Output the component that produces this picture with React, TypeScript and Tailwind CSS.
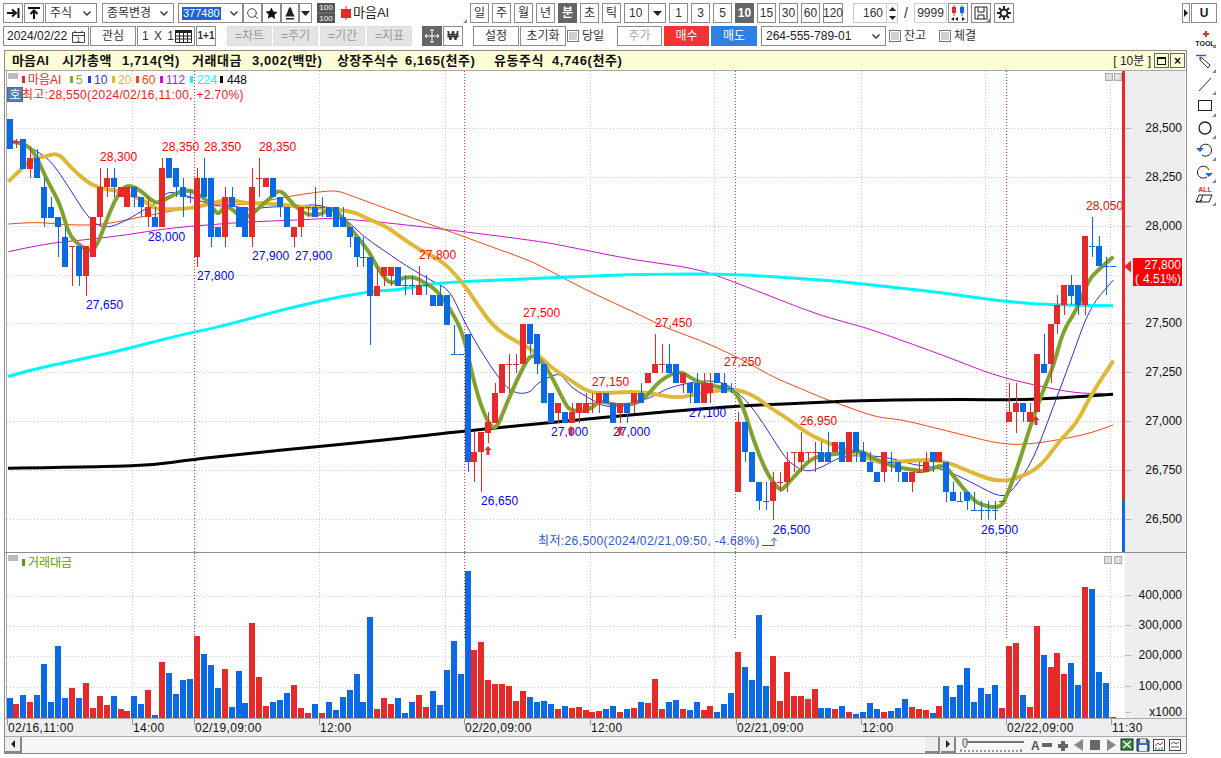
import React from "react";
import { Search } from "lucide-react";

type C = [string, number, number, number?, number?];
const g1: C[] = [
["b",28,116],["r",92,100,88,115],["b",88,178],["r",145,178,115,205],["b",145,205,118,205],["b",232,323,205,352],["b",291,323,262,323],["b",322,352,322,440],["b",380,470,350,470],["r",408,408,408,527],["b",408,497,408,527],["r",408,497,408,557],["r",322,440],["r",232,322,175,352],["r",205,232,175,262],["b",205,232,175,262],["r",232,262],["r",232,292],["b",232,262,232,292],["b",262,292,262,322],["r",292,322,262,352],["b",322,352,292,352],["r",175,352,145,352],["b",145,205],["b",175,232,175,262],["b",232,262,205,322],["b",262,262,240,280],["r",205,440,175,470],["b",205,262,145,262],["b",205,380,205,410],["b",352,380],["r",262,380,232,410],["b",262,292,232,292],["b",292,352],["b",292,380],["r",232,380,175,410],["r",205,205,145,262],["r",205,232],["b",205,262],["b",262,292,262,322],["b",292,352],["r",352,380,352,410],["r",292,352,292,380],["r",292,292,292,322],["b",292,322,232,322],["b",292,292,262,322],["b",292,322],["b",292,352],["b",322,352,292,352],["b",352,380,352,410],["b",380,440,380,470],["b",440,440,380,470],["b",440,557,440,705],["r",527,557,470,557],["r",470,497,470,527],["r",470,497,470,527],["b",470,527],
];
const g2: C[] = [
["b",135,135,105,165],["b",135,135,105,165],["r",135,165,78,165],["b",135,135,105,165],["b",165,197],["b",165,197,135,197],["b",165,255],["b",342,342,255,342],["b",342,342],["b",283,665,283,695],["r",637,665,575,725],["r",575,637,575,755],["r",545,578,515,610],["r",460,550,430,550],["r",372,460],["r",372,372,342,460],["r",372,372,342,400],["r",252,372],["b",252,312,252,342],["b",283,372,283,402],["b",372,490],["b",460,548],["r",490,520,490,548],["b",517,548],["r",517,548,490,548],["r",490,518,490,548],["r",490,518,460,518],["r",490,490,460,518],["r",460,490,460,518],["b",460,490],["b",490,548],["r",490,518,490,548],["b",490,518,490,548],["r",460,490,460,518],["b",460,490,430,490],["r",400,430],["r",372,400,283,400],["r",372,372,312,400],["b",372,400,312,400],["b",372,430],["r",400,430,400,460],["b",430,460,430,490],["b",430,490,400,490],["r",430,490,400,490],["r",430,460,400,490],["b",400,430],["b",430,460,400,460],["b",445,445,430,460],["r",545,755,515,755],["b",545,637,545,665],["b",637,725],["b",725,782,725,810],["b",782,782,725,810],["r",725,782,695,840],["r",725,725,695,755],
];
const g3: C[] = [
["r",755,815,725,845],["r",725,725,725,785],["r",725,755,665,785],["r",725,725,725,755],["r",725,725,695,785],["b",725,755,695,755],["b",725,755,665,755],["r",695,725],["b",695,755],["r",665,755],["b",665,725,665,755],["b",725,755,695,755],["b",755,785,725,785],["b",785,815],["r",725,785,725,815],["b",755,755,725,785],["b",755,785,755,815],["b",785,815],["r",785,815,785,845],["r",785,785,755,785],["r",755,785,725,785],["b",725,755,725,785],["r",725,755],["b",755,845,755,875],["b",845,872,815,872],["b",872,872,845,872],["b",845,872,845,900],["b",900,900,845,900],["b",900,900,872,930],["b",900,900,872,930],["b",900,900,872,930],["r",872,872],
["r",605,637,520,637],["r",580,605,520,668],["b",580,605,580,637],["r",605,637,580,637],["r",432,605],["b",462,490,372,490],["r",343,462,343,520],["r",285,343,255,372],["r",226,285,226,315],["b",226,257,195,285],["b",226,285,226,315],["r",78,285,78,315],["b",108,108,20,140],["b",108,168,78,168],["b",168,168,140,255],["b",168,168,168,168],
];
const bars1 = "b444 r462 b435 r456 b435 b342 b456 b288 b444 r414 b444 r399 r474 r438 r465 b438 r477 r483 b438 b462 r420 b495 r336 b369 b432 b390 b387 r258 b312 b345 b414 r357 b471 b363 b459 r219 r381 r468 b456 b450 b429 r405 r474 r489 b462 r489 b456 b480 b441 b420 b372 b456 b201 r477 r444 r462 b444 b489 b456 r435 r471 b423 b465 b360 b273 b372 b63 r300 r276 r390 r402 r402 r408 r453 r423 b441 b456 b453 b462 r477 b468 r474 r471 r480 r486 r483 b477 b468 r486 b477 r474 b456 r459 r387 r477 b456 b450 r477 b480 b456 r480 r468 b486 b462 b429 r306 b351 b390 b195 b408 r318 r453 r366 r438 r438 r447 r417 b474 b474 r477 b468 r486 b492 b486 b459 b477 r486 b483 b474 b447 r471 r477 r480 b489 r468 b408 b441 b405 b354 b456 b414 b432 b405 r474 r288 r279 b435 r471 r228 b315 r351 r309 r372 b339 b405 r111 b117 b366 b399 b501".split(" ");

const RED = "#e62a2a";
const BLUE = "#0a6ae6";
const cx = (i: number) => 9.5 + i * 6.94;
const VX = [132.5, 319.5, 445.5, 590.5, 714.5, 861.5, 985.5, 1110.5];
const RX = [194.5, 464.5, 735.5, 1006.5];

type P = [number, number];
const pts = (a: number[], bx: number, by: number, xmin: number, xmax: number): P[] => {
  const r: P[] = [];
  for (let i = 0; i < a.length; i += 2) {
    const x = bx + a[i] / 3;
    if (x >= xmin && x < xmax) r.push([x, by + a[i + 1] / 3]);
  }
  return r;
};
const ma = (z1: number[], z2: number[], z3: number[]): P[] => [
  ...pts(z1, 0, 110, 0, 400),
  ...pts(z2, 400, 240, 400, 780),
  ...pts(z3, 780, 210, 780, 1200),
];
const smooth = (p: P[]) => {
  let d = `M${p[0][0]} ${p[0][1]}`;
  for (let i = 1; i < p.length - 1; i++) {
    const mx = (p[i][0] + p[i + 1][0]) / 2;
    const my = (p[i][1] + p[i + 1][1]) / 2;
    d += ` Q${p[i][0]} ${p[i][1]} ${mx} ${my}`;
  }
  const l = p[p.length - 1];
  return d + ` L${l[0]} ${l[1]}`;
};

const green = ma(
  [36,95,80,100,110,140,140,210,180,280,205,370,235,405,270,425,290,410,320,330,345,270,370,232,390,226,420,240,470,285,500,265,540,245,570,240,600,255,630,280,654,318,675,285,700,300,720,320,750,320,780,290,810,265,840,235,880,285,920,315,960,315,1000,290,1040,340,1080,390,1110,430,1130,470,1170,525],
  [0,115,40,110,70,125,110,150,150,205,190,280,220,420,250,520,285,580,320,490,360,400,395,335,440,380,490,480,510,515,570,510,600,480,640,495,700,495,740,470,780,420,840,390,880,420,940,440,1000,445,1030,500,1060,600,1100,700,1140,750],
  [0,845,20,825,60,780,100,740,180,730,240,720,280,745,340,770,400,780,440,785,490,760,530,810,570,860,600,885,660,895,680,860,720,750,750,650,790,540,820,470,850,360,890,300,925,210,960,175,1000,140]
);
const yellow = ma(
  [25,215,60,180,100,145,135,140,175,128,210,170,260,215,300,235,340,240,380,250,430,270,465,298,520,298,580,294,640,278,690,268,740,280,800,280,860,285,920,292,1000,298,1060,305,1100,325,1160,350],
  [0,-10,60,30,130,65,190,130,230,190,280,260,340,300,400,330,450,380,510,420,570,460,640,458,700,455,760,460,830,475,900,460,1000,445,1060,465,1120,510],
  [0,610,60,654,100,680,160,705,240,735,300,760,360,755,440,748,500,755,580,790,660,818,740,795,790,760,840,690,890,640,930,560,1000,452]
);
const thin = ma(
  [100,118,140,140,180,190,230,270,270,330,310,355,350,345,390,325,430,300,470,280,500,245,540,250,580,265,620,280,660,290,700,285,740,300,770,295,820,290,880,290,940,283,980,290,1020,310,1090,380,1150,420],
  [0,65,40,90,100,125,150,150,190,240,240,330,300,420,340,460,390,460,410,430,470,400,490,410,510,440,560,470,620,505,690,490,750,475,800,445,860,430,920,420,980,430,1040,480,1090,550,1150,640],
  [0,720,30,760,80,788,130,770,180,740,260,735,340,745,400,765,460,770,520,790,580,820,665,865,700,840,760,750,820,590,880,430,930,290,1000,210]
);
const orange = ma(
  [25,342,110,335,190,345,300,345,380,330,450,315,560,295,640,280,750,285,830,265,940,248,1010,240,1060,260],
  [220,0,300,30,400,65,500,120,600,170,700,215,800,265,900,300,1010,350,1100,400],
  [0,510,60,535,130,565,200,590,290,622,360,628,450,650,550,675,665,703,750,703,860,685,930,670,1000,645]
);
const magenta = ma(
  [25,425,140,400,250,390,380,375,500,355,620,345,750,335,900,330,1030,322],
  [400,0,530,25,700,60,890,85,1000,125],
  [0,270,130,320,250,350,390,400,500,440,640,495,760,525,890,550,970,550]
);
const cyanFixed: P[] = [[8,376.5],[30,370],[70,361.5],[117,351.5],[180,335],[220,326.7],[300,305],[370,291],[400,290],[433,283],[500,280],[567,277],[647,274],[733,274],[780,277.3],[833,280.7],[893,287.3],[947,293.3],[997,300.7],[1047,305],[1113,305.7]];
const black: P[] = [[8,468.3],[110,466.7],[153,465],[193,459.3],[243,454],[317,446.7],[367,441.7],[400,438.3],[467,430.7],[600,417.7],[733,406],[800,403.3],[867,400],[970,399.3],[1007,400],[1057,398.3],[1113,394.3]];

const plotLines = (
  <>
    {VX.map((x) => <line key={x} x1={x} x2={x} y1={71} y2={552} stroke="#cfcfcf" strokeDasharray="1 2" />)}
    {[128, 177, 226, 275, 323, 372, 421, 470, 519].map((y) => <line key={y} x1={7} x2={1125} y1={y + 0.5} y2={y + 0.5} stroke="#cfcfcf" strokeDasharray="1 2" />)}
    {RX.map((x) => <line key={x} x1={x} x2={x} y1={71} y2={552} stroke="#ff2050" strokeDasharray="1 2" />)}
  </>
);

function Candles() {
  const all: { c: C; i: number; by: number }[] = [];
  g1.forEach((c, i) => all.push({ c, i, by: 110 }));
  g2.forEach((c, i) => all.push({ c, i: i + 57, by: 240 }));
  g3.forEach((c, i) => all.push({ c, i: i + 112, by: 210 }));
  return (
    <g shapeRendering="crispEdges">
      {all.map(({ c, i, by }) => {
        const x = Math.round(cx(i));
        const fill = c[0] === "r" ? RED : BLUE;
        const t = Math.round(by + c[1] / 3);
        const b = Math.round(by + c[2] / 3);
        const wt = c[3] !== undefined ? Math.round(by + c[3] / 3) : t;
        const wb = c[4] !== undefined ? Math.round(by + c[4] / 3) : b;
        return (
          <g key={i} fill={fill}>
            <rect x={x} y={wt} width={1} height={Math.max(wb - wt, 1)} />
            <rect x={x - 3} y={t} width={6} height={Math.max(b - t, 1)} />
          </g>
        );
      })}
    </g>
  );
}

const Tag = ({ x, y, c, t }: { x: number; y: number; c: string; t: string }) => (
  <text x={x} y={y + 4} fill={c} fontSize={12} letterSpacing={0.1}>{t}</text>
);
const Up = ({ x, y }: { x: number; y: number }) => (
  <path d={`M${x} ${y - 5}l3.5 4h-2v5h-3v-5h-2z`} fill={RED} />
);
const LEG: [number, number, string, string][] = [
  [22, 28, "#e62a2a", "마음AI"], [70, 76, "#85a83a", "5"], [88, 94, "#2a3ce6", "10"], [112, 118, "#e0b838", "20"], [136, 142, "#f04a10", "60"], [160, 166, "#d010d0", "112"], [190, 197, "#00ffff", "224"], [220, 227, "#000000", "448"],
];

function Upper() {
  return (
    <svg width={1120} height={481} viewBox="5 71 1120 481" className="block shrink-0">
      <rect x={5} y={71} width={1120} height={481} fill="#fff" />
      {plotLines}
      <line x1={6.5} x2={6.5} y1={71} y2={552} stroke="#aaa" />
      <path d={smooth(magenta)} fill="none" stroke="#d010d0" strokeWidth={1} />
      <path d={smooth(orange)} fill="none" stroke="#f04a10" strokeWidth={1} />
      <path d={smooth(thin)} fill="none" stroke="#2a30e0" strokeWidth={1} />
      <path d={smooth(cyanFixed)} fill="none" stroke="#00f6ff" strokeWidth={3} />
      <path d={smooth(black)} fill="none" stroke="#000" strokeWidth={3} />
      <path d={smooth(yellow)} fill="none" stroke="#e0b838" strokeWidth={4} strokeLinejoin="round" />
      <path d={smooth(green)} fill="none" stroke="#7fa32e" strokeWidth={4} strokeLinejoin="round" />
      <Candles />
      <rect x={8} y={73} width={10} height={6} fill="#bbb" />
      {LEG.map(([mx, tx, c, t]) => (
        <g key={t}>
          <rect x={mx} y={76} width={3} height={7} fill={c} />
          <text x={tx} y={84} fill={c} fontSize={12}>{t}</text>
        </g>
      ))}
      <rect x={7.5} y={87.5} width={15} height={14} fill="#4f7fbd" stroke="#5a6a80" />
      <text x={15} y={99} fill="#fff" fontSize={12} textAnchor="middle">호</text>
      <text x={22} y={99} fill="#f01820" fontSize={12} letterSpacing={0.33}>최고:28,550(2024/02/16,11:00, +2.70%)</text>
      <Tag x={100} y={157} c="#f00" t="28,300" />
      <Tag x={162} y={147} c="#f00" t="28,350" />
      <Tag x={204} y={147} c="#f00" t="28,350" />
      <Tag x={259} y={147} c="#f00" t="28,350" />
      <Tag x={419} y={255} c="#f00" t="27,800" />
      <Tag x={523} y={313} c="#f00" t="27,500" />
      <Tag x={655} y={323} c="#f00" t="27,450" />
      <Tag x={724} y={362} c="#f00" t="27,250" />
      <Tag x={592} y={382} c="#f00" t="27,150" />
      <Tag x={800} y={421} c="#f00" t="26,950" />
      <Tag x={1086} y={206} c="#f00" t="28,050" />
      <Tag x={86} y={305} c="#00f" t="27,650" />
      <Tag x={148} y={237} c="#00f" t="28,000" />
      <Tag x={197} y={276} c="#00f" t="27,800" />
      <Tag x={252} y={256} c="#00f" t="27,900" />
      <Tag x={295} y={256} c="#00f" t="27,900" />
      <Tag x={481} y={501} c="#00f" t="26,650" />
      <Tag x={551} y={432} c="#00f" t="27,000" />
      <Tag x={613} y={432} c="#00f" t="27,000" />
      <Tag x={689} y={413} c="#00f" t="27,100" />
      <Tag x={773} y={530} c="#00f" t="26,500" />
      <Tag x={981} y={530} c="#00f" t="26,500" />
      <Up x={488} y={451} />
      <Up x={571} y={431} />
      <Up x={620} y={431} />
      <Up x={1036} y={421} />
      <text x={538} y={545} fill="#2a5ad0" fontSize={12} letterSpacing={0.38}>최저:26,500(2024/02/21,09:50, -4.68%)</text>
      <path d="M762 545.5h12M774 545.5v-6M771.5 541l2.5-3 2.5 3" fill="none" stroke="#2a5ad0" />
      <g fill="#ddd" stroke="#aaa">
        <rect x={1105.5} y={73.5} width={7} height={7} />
        <rect x={1114.5} y={73.5} width={7} height={7} />
      </g>
      <path d="M1116 75.5l3 3M1119 75.5l-3 3" stroke="#fff" />
      <rect x={1122} y={71} width={3} height={429} fill={RED} />
      <rect x={1122} y={500} width={3} height={52} fill={BLUE} />
    </svg>
  );
}

function Lower() {
  return (
    <svg width={1120} height={165} viewBox="5 553 1120 165" className="block shrink-0">
      <rect x={5} y={553} width={1120} height={165} fill="#fff" />
      {VX.map((x) => <line key={x} x1={x} x2={x} y1={553} y2={718} stroke="#cfcfcf" strokeDasharray="1 2" />)}
      {[596, 626, 656, 687].map((y) => <line key={y} x1={7} x2={1125} y1={y + 0.5} y2={y + 0.5} stroke="#cfcfcf" strokeDasharray="1 2" />)}
      {RX.map((x) => <line key={x} x1={x} x2={x} y1={553} y2={640} stroke="#ff2050" strokeDasharray="1 2" />)}
      <line x1={6.5} x2={6.5} y1={553} y2={718} stroke="#aaa" />
      <rect x={8} y={555} width={10} height={6} fill="#bbb" />
      <rect x={22} y={559} width={3} height={7} fill="#5ca000" />
      <text x={28} y={567} fill="#5ca000" fontSize={12}>거래대금</text>
      <g shapeRendering="crispEdges">
        {bars1.map((b, i) => {
          const top = Math.round(550 + Number(b.slice(1)) / 3);
          return <rect key={i} x={Math.round(cx(i)) - 3} y={top} width={6} height={718 - top} fill={b[0] === "r" ? RED : BLUE} />;
        })}
      </g>
      <g fill="#ddd" stroke="#aaa">
        <rect x={1104.5} y={556.5} width={7} height={7} />
        <rect x={1114.5} y={556.5} width={7} height={7} />
      </g>
    </svg>
  );
}

const Axis = ({ h, top, items }: { h: number; top: number; items: [string, number][] }) => (
  <svg width={60} height={h} viewBox={`1125 ${top} 60 ${h}`} className="block shrink-0">
    <rect x={1125} y={top} width={60} height={h} fill="#eeeeee" />
    {items.map(([t, y]) => (
      <g key={t}>
        <line x1={1125} x2={1131} y1={y + 0.5} y2={y + 0.5} stroke="#bbb" />
        <text x={1182} y={y + 4} textAnchor="end" fontSize={12} fill="#111">{t}</text>
      </g>
    ))}
    {top < 100 && (
      <g>
        <path d="M1124 266.5l7-6v12z" fill={RED} />
        <rect x={1133} y={258} width={49} height={28} fill="#f00" />
        <text x={1181} y={269} textAnchor="end" fontSize={12} fill="#fff">27,800</text>
        <text x={1135} y={283} fontSize={12} fill="#fff">(</text>
        <text x={1181} y={283} textAnchor="end" fontSize={12} fill="#fff">4.51%)</text>
      </g>
    )}
  </svg>
);

const base = "border border-[#8c8c8c] bg-white text-[#333] text-[12px] flex items-center justify-center shrink-0 leading-none whitespace-nowrap";
const Chev = () => (
  <svg width={10} height={7} viewBox="0 0 10 7" className="shrink-0"><path d="M1.5 1.5L5 5l3.5-3.5" fill="none" stroke="#333" strokeWidth={1.4} /></svg>
);
const Caret = () => (
  <svg width={9} height={5} viewBox="0 0 9 5" className="shrink-0"><path d="M0 0h9L4.5 5z" fill="#222" /></svg>
);
const Corner = () => (
  <span className="absolute right-0 bottom-0 w-0 h-0 border-l-[4px] border-l-transparent border-b-[4px] border-b-[#888]" />
);
const Cb = () => (
  <span className="block w-[12px] h-[12px] border border-[#777] bg-[#d0d0d0] shrink-0 shadow-[inset_0_0_0_1px_#fff]" />
);
const Tf = ({ t, w = "w-[19px]", a }: { t: string; w?: string; a?: boolean }) => (
  <div className={a ? `${w} h-[20px] ml-[3px] bg-[#666] text-white font-bold text-[12px] flex items-center justify-center shrink-0 leading-none` : `${base} ${w} h-[20px] ml-[3px]`}>{t}</div>
);
const Dis = ({ t, cl }: { t: string; cl: string }) => (
  <div className={`${cl} w-[45px] h-[20px] bg-[#e4e4e4] border border-[#ddd] text-[#999] text-[12px] flex items-center justify-center shrink-0 leading-none`}>{t}</div>
);

function Row1() {
  return (
    <div className="flex h-[20px] mt-[3px] ml-[3px]">
      <div className={`${base} w-[20px] h-[20px]`}>
        <svg width={13} height={10} viewBox="0 0 13 10"><path d="M0 5h7M5 1.5L9 5 5 8.5M11.5 0v10" fill="none" stroke="#111" strokeWidth={2} /></svg>
      </div>
      <div className={`${base} w-[20px] h-[20px] ml-[1px]`}>
        <svg width={12} height={12} viewBox="0 0 12 12"><path d="M0 1h12M6 12V4M2.500 7L6 3.500 9.500 7" fill="none" stroke="#111" strokeWidth={2} /></svg>
      </div>
      <div className={`${base} w-[52px] h-[20px] ml-[1px] !justify-between px-[4px]`}><span>주식</span><Chev /></div>
      <div className={`${base} w-[72px] h-[20px] ml-[5px] !justify-between px-[4px]`}><span>종목변경</span><Chev /></div>
      <div className={`${base} w-[65px] h-[20px] ml-[4px] !justify-between px-[3px]`}>
        <span className="bg-[#1b66d2] text-white px-[1px] h-[13px] flex items-center text-[11px]">377480</span><Chev />
      </div>
      <div className={`${base} w-[19px] h-[20px]`}><Search size={13} strokeWidth={1.6} /></div>
      <div className={`${base} w-[19px] h-[20px]`}>
        <svg width={13} height={13} viewBox="0 0 24 24"><path d="M12 1l3.400 7.300 7.600 1-5.600 5.400 1.400 7.900L12 18l-6.800 3.600 1.400-7.900L1 8.300l7.600-1z" fill="#111" /></svg>
      </div>
      <div className={`${base} w-[18px] h-[20px]`}>
        <svg width={12} height={13} viewBox="0 0 12 13"><path d="M6 0C3.500 2 4 6 1 9.500h10C8 6 8.500 2 6 0zM2 11h8v1.500H2z" fill="#222" /></svg>
      </div>
      <div className={`${base} w-[13px] h-[20px]`}><Caret /></div>
      <div className="w-[18px] h-[20px] ml-[5px] bg-[#666] flex flex-col justify-between shrink-0">
        <span className="text-[8px] leading-[9px] text-white text-center bg-[#555]">100</span>
        <span className="text-[8px] leading-[9px] text-white text-center bg-[#555]">100</span>
      </div>
      <div className="relative w-[126px] h-[20px] ml-[6px] flex items-center text-[13px] text-[#222] shrink-0">
        <svg width={10} height={14} viewBox="0 0 10 14" className="mr-[2px] shrink-0"><path d="M5 0v14" stroke="#e62a2a" /><rect x={0} y={3} width={10} height={9} fill="#e62a2a" /></svg>
        마음AI
        <Corner />
      </div>
      <Tf t="일" />
      <Tf t="주" />
      <Tf t="월" />
      <Tf t="년" />
      <Tf t="분" a />
      <Tf t="초" />
      <Tf t="틱" />
      <div className={`${base} w-[42px] h-[20px] ml-[3px]`}>
        <span className="flex-1 pl-[4px]">10</span>
        <span className="w-[17px] h-full border-l border-[#8c8c8c] flex items-center justify-center"><Caret /></span>
      </div>
      <Tf t="1" />
      <Tf t="3" />
      <Tf t="5" />
      <Tf t="10" a />
      <Tf t="15" />
      <Tf t="30" />
      <Tf t="60" />
      <Tf t="120" w="w-[20px]" />
      <div className="w-[45px] h-[20px] ml-[10px] flex border border-[#ccc] shrink-0 text-[12px] text-[#333] leading-none">
        <span className="flex-1 flex items-center justify-end pr-[3px]">160</span>
        <span className="w-[11px] flex flex-col border-l border-[#ccc] items-center justify-around">
          <svg width={7} height={4} viewBox="0 0 7 4"><path d="M0 4h7L3.500 0z" fill="#222" /></svg>
          <svg width={7} height={4} viewBox="0 0 7 4"><path d="M0 0h7L3.500 4z" fill="#222" /></svg>
        </span>
      </div>
      <span className="w-[16px] text-center text-[14px] leading-[20px] text-[#333] shrink-0">/</span>
      <div className="w-[33px] h-[20px] border border-[#ccc] flex items-center justify-center text-[12px] text-[#333] shrink-0 leading-none">9999</div>
      <div className={`${base} relative w-[20px] h-[20px] ml-[1px]`}>
        <svg width={16} height={16} viewBox="0 0 16 16">
          <path d="M4 0v11" stroke="#e62a2a" /><rect x={2} y={2} width={4} height={6} fill="#e62a2a" />
          <path d="M12 0v11" stroke={BLUE} /><rect x={10} y={2} width={4} height={6} fill={BLUE} />
          <path d="M1 14l3-2v4zM5 14l3-2v4zM12 12l3 2-3 2z" fill="#222" />
        </svg>
      </div>
      <div className={`${base} relative w-[20px] h-[20px] ml-[3px]`}>
        <svg width={14} height={14} viewBox="0 0 14 14"><path d="M1 1h12v12H1zM4 1v5h6V1M4 13V9h6v4" fill="none" stroke="#222" /></svg>
        <Corner />
      </div>
      <div className={`${base} w-[20px] h-[20px] ml-[3px]`}>
        <svg width={14} height={14} viewBox="0 0 14 14"><circle cx={7} cy={7} r={3.500} fill="none" stroke="#222" strokeWidth={2} /><path d="M7 0v3M7 11v3M0 7h3M11 7h3M2 2l2 2M10 10l2 2M12 2l-2 2M4 10l-2 2" stroke="#222" strokeWidth={2} /></svg>
      </div>
      <div className="flex-1" />
      <div className={`${base} w-[8px] h-[20px]`}>
        <svg width={4} height={8} viewBox="0 0 4 8"><path d="M0 0l4 4-4 4z" fill="#222" /></svg>
      </div>
      <div className={`${base} w-[26px] h-[20px] ml-[1px] font-bold !text-[#222] mr-[4px]`}>U</div>
    </div>
  );
}

function Row2() {
  return (
    <div className="flex h-[20px] mt-[3px] ml-[3px] items-center">
      <div className={`${base} w-[86px] h-[20px] !justify-between px-[3px] !text-[#222]`}>
        <span>2024/02/22</span>
        <svg width={13} height={13} viewBox="0 0 13 13"><path d="M.5 2.500h12v10H.5zM.5 5.500h12M3 .5v2M10 .5v2" fill="none" stroke="#444" /><text x={6.500} y={12} fontSize={7} textAnchor="middle" fill="#333">1</text></svg>
      </div>
      <div className={`${base} w-[46px] h-[20px] ml-[1px]`}>관심</div>
      <div className={`${base} w-[58px] h-[20px] ml-[1px] !justify-between pl-[4px] pr-[2px]`}>
        <span className="tracking-[1px]">1 X 1</span>
        <svg width={17} height={13} viewBox="0 0 17 13"><path d="M.5.5h16v12H.5z" fill="#fff" stroke="#222" /><rect width={17} height={3} fill="#222" /><path d="M0 6h17M0 9h17M4.500 3v10M8.500 3v10M12.500 3v10" stroke="#222" /></svg>
      </div>
      <div className={`${base} w-[20px] h-[20px] ml-[1px] !text-[10px] font-bold`}>1+1</div>
      <Dis t="=차트" cl="ml-[11px]" />
      <Dis t="=주기" cl="ml-[1px]" />
      <Dis t="=기간" cl="ml-[2px]" />
      <Dis t="=지표" cl="ml-[2px]" />
      <div className="w-[20px] h-[20px] ml-[10px] bg-[#666] flex items-center justify-center shrink-0">
        <svg width={16} height={16} viewBox="0 0 16 16"><path d="M8 1v14M1 8h14M6 3l2-2 2 2M6 13l2 2 2-2M3 6L1 8l2 2M13 6l2 2-2 2" fill="none" stroke="#fff" /></svg>
      </div>
      <div className={`${base} w-[20px] h-[20px] ml-[1px] font-bold`}>₩</div>
      <div className={`${base} w-[46px] h-[20px] ml-[10px]`}>설정</div>
      <div className={`${base} w-[46px] h-[20px] ml-[1px]`}>초기화</div>
      <span className="ml-[1px] shrink-0"><Cb /></span>
      <span className="ml-[3px] w-[35px] shrink-0 text-[12px] text-[#333] leading-none">당일</span>
      <div className={`${base} w-[45px] h-[20px] !text-[#aaa]`}>주가</div>
      <div className="w-[45px] h-[20px] ml-[2px] bg-[#f33232] text-white text-[12px] flex items-center justify-center shrink-0 leading-none">매수</div>
      <div className="w-[46px] h-[20px] ml-[2px] bg-[#2f7fe6] text-white text-[12px] flex items-center justify-center shrink-0 leading-none">매도</div>
      <div className={`${base} w-[125px] h-[20px] ml-[4px] !justify-between px-[4px] !text-[#222]`}><span>264-555-789-01</span><Chev /></div>
      <span className="ml-[3px] shrink-0"><Cb /></span>
      <span className="ml-[3px] w-[35px] shrink-0 text-[12px] text-[#333] leading-none">잔고</span>
      <span className="shrink-0"><Cb /></span>
      <span className="ml-[3px] shrink-0 text-[12px] text-[#333] leading-none">체결</span>
    </div>
  );
}

const toolWrap = "relative w-[22px] flex items-center justify-center shrink-0";
function Tools() {
  return (
    <div className="w-[34px] shrink-0 flex flex-col items-center pt-[4px] pl-[2px]">
      <div className={`${toolWrap} h-[21px]`}>
        <svg width={22} height={18} viewBox="0 0 22 18"><path d="M12 2v6M9 5h6" stroke="#e62a2a" strokeWidth={2} /><text x={11} y={16.500} fontSize={7} fontWeight={700} textAnchor="middle" fill="#222">TOOL</text></svg><Corner />
      </div>
      <div className={`${toolWrap} h-[22px] mt-[3px]`}>
        <svg width={20} height={16} viewBox="0 0 20 16"><path d="M1 1.500h10" stroke={BLUE} strokeWidth={1.500} /><path d="M5 3l2 1 8 7-2 3-8-8z" fill="#fff" stroke="#333" /><path d="M5 3l2 1-1.500 2z" fill="#e62a2a" /></svg><Corner />
      </div>
      <div className={`${toolWrap} h-[22px]`}>
        <svg width={16} height={16} viewBox="0 0 16 16"><path d="M2 15L14 2" stroke="#333" /></svg><Corner />
      </div>
      <div className={`${toolWrap} h-[22px]`}>
        <svg width={16} height={14} viewBox="0 0 16 14"><rect x={1.500} y={1.500} width={13} height={10} fill="none" stroke="#222" /></svg><Corner />
      </div>
      <div className={`${toolWrap} h-[22px]`}>
        <svg width={16} height={16} viewBox="0 0 16 16"><circle cx={8} cy={8} r={6} fill="none" stroke="#222" strokeWidth={1.300} /></svg><Corner />
      </div>
      <div className={`${toolWrap} h-[22px]`}>
        <svg width={18} height={16} viewBox="0 0 18 16"><path d="M4 6a6 6 0 1 1 2 7" fill="none" stroke="#222" /><path d="M0 6h8L4 10z" fill={BLUE} /></svg><Corner />
      </div>
      <div className={`${toolWrap} h-[22px]`}>
        <svg width={18} height={16} viewBox="0 0 18 16"><path d="M13 6a6 6 0 1 0-2 7" fill="none" stroke="#222" /><path d="M9 9h8l-4 4z" fill={BLUE} /></svg><Corner />
      </div>
      <div className={`${toolWrap} h-[22px] mt-[1px]`}>
        <svg width={20} height={20} viewBox="0 0 20 20"><text x={10} y={6.500} fontSize={7} fontWeight={700} textAnchor="middle" fill="#e62a2a">ALL</text><path d="M4 10h13l-3 7H1zM1 17l5-1 1-1 M8 10l-3 7" fill="#fff" stroke="#222" /></svg><Corner />
      </div>
    </div>
  );
}

const DATES: [number, string][] = [[8, "02/16,11:00"], [133, "14:00"], [195, "02/19,09:00"], [320, "12:00"], [465, "02/20,09:00"], [591, "12:00"], [737, "02/21,09:00"], [862, "12:00"], [1007, "02/22,09:00"], [1112, "11:30"]];

function BottomIcons() {
  return (
    <svg width={160} height={16} viewBox="1028 737 160 16" className="block shrink-0">
      <text x={1033} y={750} fontSize={12} fontWeight={700} fill="#555">A</text>
      <rect x={1044} y={743} width={10} height={4} fill="#666" />
      <path d="M1063 741h4v3h3v4h-3v3h-4v-3h-3v-4h3z" fill="#666" />
      <path d="M1085 739v12l-9-6z" fill="#888" />
      <rect x={1092} y={740} width={10} height={10} fill="#666" />
      <path d="M1109 739v12l9-6z" fill="#888" />
      <rect x={1123} y={739} width={12} height={11} fill="#2e8b3a" stroke="#222" />
      <path d="M1125 741l8 7M1133 741l-8 7" stroke="#fff" strokeWidth={1.500} />
      <path d="M1139 739h10l2 2v10h-12z" fill="#3a6fc0" stroke="#223" />
      <rect x={1142} y={739} width={6} height={4} fill="#ddd" />
      <rect x={1141} y={745} width={8} height={6} fill="#eee" />
      <rect x={1155.500} y={739.500} width={11} height={11} fill="#fff" stroke="#444" />
      <path d="M1157 746l3-3 2 2 3-3" fill="none" stroke="#e62a2a" />
      <path d="M1158 750v-3M1161 750v-2M1164 750v-3" stroke="#1a8a2a" />
      <rect x={1171.500} y={739.500} width={11} height={11} fill="#fff" stroke="#444" />
      <path d="M1173 744l3-2 2 2 3-2" fill="none" stroke="#e62a2a" />
      <path d="M1173 747h8" stroke="#555" />
    </svg>
  );
}

export default function App() {
  return (
    <div className="w-[1221px] h-[758px] bg-white overflow-hidden flex flex-col [font-family:'Liberation_Sans','Noto_Sans_CJK_KR',sans-serif]">
      <Row1 />
      <div className="flex flex-1 min-h-0">
        <div className="w-[1187px] shrink-0">
          <Row2 />
          <div className="ml-[4px] mt-[4px] w-[1183px] border border-[#8c8c8c]">
            <div className="h-[19px] bg-[#fdfdd6] flex items-center pl-[7px] pr-[1px] font-bold text-[13px] text-[#111] leading-none whitespace-pre">
              <span className="w-[50px] shrink-0">마음AI</span>
              <span className="w-[60px] shrink-0 tracking-[0.5px]">시가총액</span>
              <span className="w-[70px] shrink-0 tracking-[0.6px]">1,714(억)</span>
              <span className="w-[60px] shrink-0 tracking-[0.5px]">거래대금</span>
              <span className="w-[85px] shrink-0 tracking-[0.6px]">3,002(백만)</span>
              <span className="w-[68px] shrink-0 tracking-[0.3px]">상장주식수</span>
              <span className="w-[89px] shrink-0 tracking-[0.6px]">6,165(천주)</span>
              <span className="w-[58px] shrink-0 tracking-[0.5px]">유동주식</span>
              <span className="shrink-0 tracking-[0.6px]">4,746(천주)</span>
              <span className="ml-auto text-[12px] font-normal text-[#222] mr-[1px]">[ 10분 ]</span>
              <div className="w-[15px] h-[15px] border border-[#666] ml-[2px] flex items-center justify-center shrink-0 bg-[#fdfdd6]">
                <span className="w-[9px] h-[8px] border border-[#111] border-t-2" />
              </div>
              <div className="w-[15px] h-[15px] border border-[#666] ml-[1px] flex items-center justify-center shrink-0 text-[12px] font-bold text-[#111]">×</div>
            </div>
            <div className="h-px bg-[#aaa]" />
            <div className="flex border-b border-[#8c8c8c]">
              <Upper />
              <Axis h={481} top={71} items={[["28,500", 128], ["28,250", 177], ["28,000", 226], ["27,500", 323], ["27,250", 372], ["27,000", 421], ["26,750", 470], ["26,500", 519]]} />
            </div>
            <div className="flex border-b border-[#aaa]">
              <Lower />
              <Axis h={165} top={553} items={[["400,000", 595], ["300,000", 625], ["200,000", 655], ["100,000", 686], ["x1000", 712]]} />
            </div>
            <svg width={1181} height={17} viewBox="5 719 1181 17" className="block bg-[#eeeeee] border-b border-[#aaa] box-content">
              {DATES.map(([x, t]) => (
                <g key={t + x}>
                  <line x1={x - 0.5} x2={x - 0.5} y1={719} y2={725} stroke="#999" />
                  <text x={x} y={732} fontSize={12} fill="#111" letterSpacing={0.3}>{t}</text>
                </g>
              ))}
            </svg>
            <div className="h-[16px] bg-[#f6f6f6] flex items-stretch">
              <div className="w-[17px] bg-[#eee] border-r-2 border-b-2 border-[#888] flex items-center justify-center shrink-0">
                <svg width={4} height={8} viewBox="0 0 4 8"><path d="M4 0L0 4l4 4z" fill="#222" /></svg>
              </div>
              <div className="flex-1" />
              <div className="w-[15px] bg-[#eee] border-r-2 border-b-2 border-[#888] shrink-0" />
              <div className="w-[15px] ml-[1px] bg-[#eee] border-r-2 border-b-2 border-[#888] flex items-center justify-center shrink-0">
                <svg width={4} height={8} viewBox="0 0 4 8"><path d="M0 0l4 4-4 4z" fill="#222" /></svg>
              </div>
              <svg width={66} height={16} viewBox="0 0 66 16" className="ml-[4px] shrink-0">
                <path d="M4 5h60" stroke="#777" strokeWidth={2} />
                <path d="M3 2h4v6l-2 3-2-3z" fill="#ddd" stroke="#666" />
                <path d="M1 15v-3M5 15v-2M9 15v-2M13 15v-2M17 15v-2M21 15v-2M25 15v-2M29 15v-2M33 15v-2M37 15v-2M41 15v-2M45 15v-2M49 15v-2M53 15v-2M57 15v-2M61 15v-3" stroke="#444" />
              </svg>
              <BottomIcons />
            </div>
          </div>
        </div>
        <Tools />
      </div>
    </div>
  );
}
